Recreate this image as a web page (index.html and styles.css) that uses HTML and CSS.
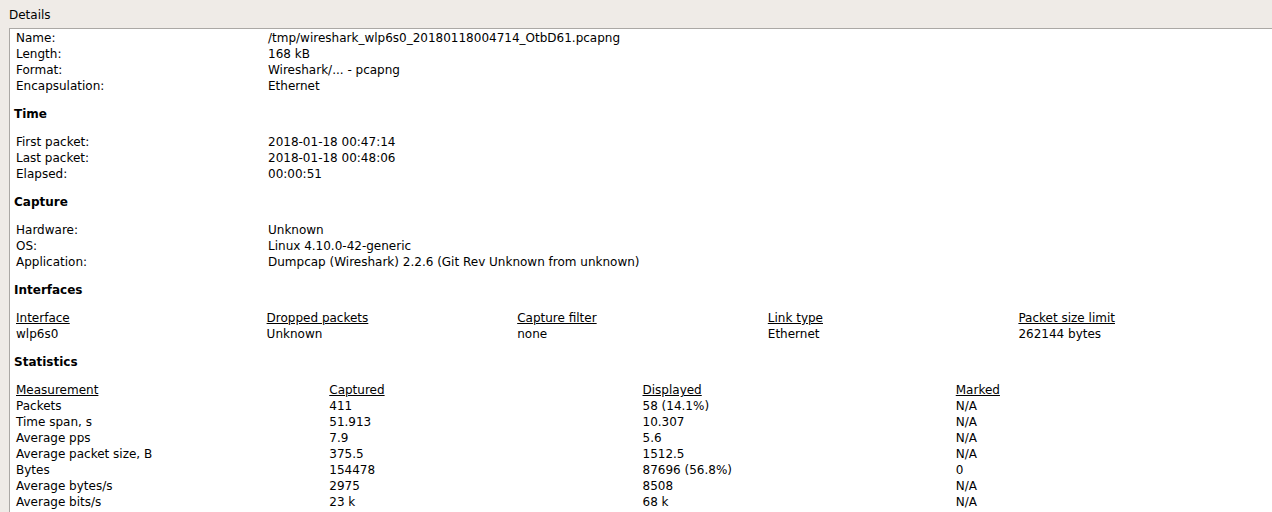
FILE: index.html
```html
<!DOCTYPE html>
<html>
<head>
<meta charset="utf-8">
<title>Capture File Properties</title>
<link rel="stylesheet" href="styles.css">
</head>
<body>
<div class="label">Details</div>
<div class="frame">
  <div class="content">
    <div class="kv">
      <div class="c">Name:</div><div class="c">/tmp/wireshark_wlp6s0_20180118004714_OtbD61.pcapng</div>
      <div class="c">Length:</div><div class="c">168 kB</div>
      <div class="c">Format:</div><div class="c">Wireshark/... - pcapng</div>
      <div class="c">Encapsulation:</div><div class="c">Ethernet</div>
    </div>
    <div class="heading">Time</div>
    <div class="kv">
      <div class="c">First packet:</div><div class="c">2018-01-18 00:47:14</div>
      <div class="c">Last packet:</div><div class="c">2018-01-18 00:48:06</div>
      <div class="c">Elapsed:</div><div class="c">00:00:51</div>
    </div>
    <div class="heading">Capture</div>
    <div class="kv">
      <div class="c">Hardware:</div><div class="c">Unknown</div>
      <div class="c">OS:</div><div class="c">Linux 4.10.0-42-generic</div>
      <div class="c">Application:</div><div class="c">Dumpcap (Wireshark) 2.2.6 (Git Rev Unknown from unknown)</div>
    </div>
    <div class="heading">Interfaces</div>
    <div class="table five">
      <div class="c th">Interface</div><div class="c th">Dropped packets</div><div class="c th">Capture filter</div><div class="c th">Link type</div><div class="c th">Packet size limit</div>
      <div class="c">wlp6s0</div><div class="c">Unknown</div><div class="c">none</div><div class="c">Ethernet</div><div class="c">262144 bytes</div>
    </div>
    <div class="heading">Statistics</div>
    <div class="table four">
      <div class="c th">Measurement</div><div class="c th">Captured</div><div class="c th">Displayed</div><div class="c th">Marked</div>
      <div class="c">Packets</div><div class="c">411</div><div class="c">58 (14.1%)</div><div class="c">N/A</div>
      <div class="c">Time span, s</div><div class="c">51.913</div><div class="c">10.307</div><div class="c">N/A</div>
      <div class="c">Average pps</div><div class="c">7.9</div><div class="c">5.6</div><div class="c">N/A</div>
      <div class="c">Average packet size, B</div><div class="c">375.5</div><div class="c">1512.5</div><div class="c">N/A</div>
      <div class="c">Bytes</div><div class="c">154478</div><div class="c">87696 (56.8%)</div><div class="c">0</div>
      <div class="c">Average bytes/s</div><div class="c">2975</div><div class="c">8508</div><div class="c">N/A</div>
      <div class="c">Average bits/s</div><div class="c">23 k</div><div class="c">68 k</div><div class="c">N/A</div>
    </div>
  </div>
</div>
</body>
</html>
```

FILE: styles.css
```css
html, body {
  margin: 0;
  padding: 0;
  overflow: hidden;
  height: 512px;
}
body {
  background: #efebe7;
  font-family: "DejaVu Sans", sans-serif;
  font-size: 12px;
  color: #000;
}
.label {
  box-sizing: border-box;
  height: 28px;
  padding: 7px 0 0 9px;
  line-height: 16px;
}
.frame {
  margin-left: 9px;
  width: 1290px;
  height: 500px;
  border: 1px solid #aba8a5;
  background: #fff;
}
.content {
  padding: 1px 0 0 4px;
  line-height: 16px;
}
.c {
  padding-left: 2px;
  white-space: nowrap;
}
.kv {
  display: grid;
  grid-template-columns: 252px auto;
  justify-content: start;
}
.heading {
  font-weight: bold;
  margin: 12px 0;
}
.table {
  display: grid;
  width: 1253px;
}
.five {
  grid-template-columns: repeat(5, 1fr);
}
.four {
  grid-template-columns: repeat(4, 1fr);
}
.th {
  text-decoration: underline;
}
```
